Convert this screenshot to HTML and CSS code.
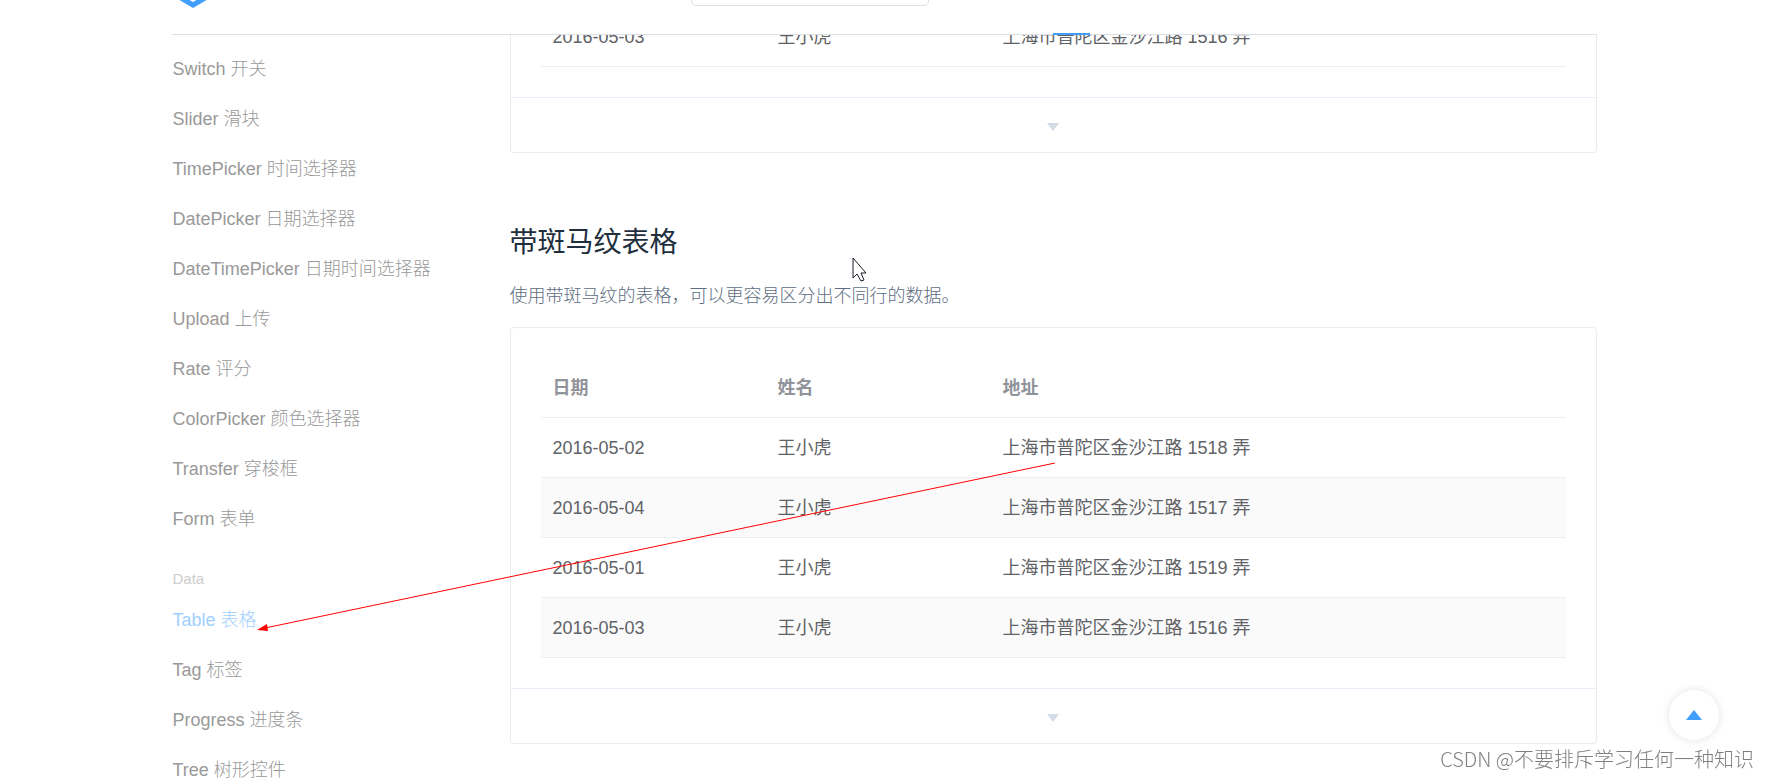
FILE: index.html
```html
<!DOCTYPE html>
<html lang="zh-CN">
<head>
<meta charset="utf-8">
<title>Table 表格</title>
<meta name="viewport" content="width=device-width, initial-scale=1">
<link rel="stylesheet" href="styles.css">
</head>
<body>
<header class="header">
  <div class="header-inner">
    <a class="logo" href="#" aria-label="Element">
      <svg width="42" height="46" viewBox="0 0 42 46" aria-hidden="true"><path d="M21 3 38 13V33L21 43 4 33V13Z" fill="none" stroke="#409eff" stroke-width="5"/></svg>
    </a>
    <input class="search" type="search" aria-label="搜索">
    <span class="nav-active"></span>
  </div>
</header>

<div class="page">
  <nav class="side">
    <a href="#">Switch 开关</a>
    <a href="#">Slider 滑块</a>
    <a href="#">TimePicker 时间选择器</a>
    <a href="#">DatePicker 日期选择器</a>
    <a href="#">DateTimePicker 日期时间选择器</a>
    <a href="#">Upload 上传</a>
    <a href="#">Rate 评分</a>
    <a href="#">ColorPicker 颜色选择器</a>
    <a href="#">Transfer 穿梭框</a>
    <a href="#">Form 表单</a>
    <div class="side-group">Data</div>
    <a class="active" href="#">Table 表格</a>
    <a href="#">Tag 标签</a>
    <a href="#">Progress 进度条</a>
    <a href="#">Tree 树形控件</a>
  </nav>

  <main class="content">
    <section class="demo demo-scrolled">
      <div class="demo-body">
        <table class="table">
          <tbody>
            <tr><td>2016-05-03</td><td>王小虎</td><td>上海市普陀区金沙江路 1516 弄</td></tr>
          </tbody>
        </table>
      </div>
      <button class="demo-toggle" type="button" aria-label="展开"><svg width="12" height="8" viewBox="0 0 12 8" aria-hidden="true"><path d="M0 0H12L6 8Z" fill="#d3dce6"/></svg></button>
    </section>

    <h3 class="title">带斑马纹表格</h3>
    <p class="desc">使用带斑马纹的表格，可以更容易区分出不同行的数据。</p>

    <section class="demo">
      <div class="demo-body">
        <table class="table striped">
          <thead>
            <tr><th>日期</th><th>姓名</th><th>地址</th></tr>
          </thead>
          <tbody>
            <tr><td>2016-05-02</td><td>王小虎</td><td>上海市普陀区金沙江路 1518 弄</td></tr>
            <tr><td>2016-05-04</td><td>王小虎</td><td>上海市普陀区金沙江路 1517 弄</td></tr>
            <tr><td>2016-05-01</td><td>王小虎</td><td>上海市普陀区金沙江路 1519 弄</td></tr>
            <tr><td>2016-05-03</td><td>王小虎</td><td>上海市普陀区金沙江路 1516 弄</td></tr>
          </tbody>
        </table>
      </div>
      <button class="demo-toggle" type="button" aria-label="展开"><svg width="12" height="8" viewBox="0 0 12 8" aria-hidden="true"><path d="M0 0H12L6 8Z" fill="#d3dce6"/></svg></button>
    </section>
  </main>
</div>

<button class="backtop" type="button" aria-label="返回顶部"><svg width="16" height="10" viewBox="0 0 16 10" aria-hidden="true"><path d="M8 0 16 10H0Z" fill="#409eff"/></svg></button>

<svg class="arrow" width="799" height="172" viewBox="0 0 799 172" aria-hidden="true">
  <path d="M798 1 8 166" stroke="#f00" stroke-width="1" fill="none"/>
  <path d="M0 168 10 162 11 169Z" fill="#f00"/>
</svg>
<svg class="cursor" width="17" height="26" viewBox="0 0 17 26" aria-hidden="true"><path d="M1 1V21L5 17 9 24 12 23 9 16H14Z" fill="#fff" stroke="#1a1a2a" stroke-width="1"/></svg>
<div class="watermark">CSDN @不要排斥学习任何一种知识</div>
</body>
</html>
```
FILE: styles.css
```css
* {
  box-sizing: border-box;
}

body {
  margin: 0;
  height: 100vh;
  overflow: hidden;
  background: #fff;
  color: #606266;
  font-family: "Liberation Sans", "Noto Sans CJK SC", sans-serif;
  font-size: 18px;
  font-weight: 400;
}

.header {
  position: fixed;
  z-index: 2;
  top: -65px;
  left: 0;
  right: 0;
  height: 100px;
}

.header-inner {
  display: flex;
  align-items: center;
  max-width: 1425px;
  height: 100%;
  margin: 0 auto;
  border-bottom: 1px solid #dcdfe6;
  background: #fff;
}

.logo {
  display: flex;
  width: 519px;
}

.search {
  width: 238px;
  height: 42px;
  border: 1px solid #dcdfe6;
  border-radius: 5px;
  background: #fff;
}

.nav-active {
  align-self: flex-end;
  width: 37px;
  height: 2px;
  margin: 0 0 -1px 124px;
  background: #409eff;
}

.page {
  display: flex;
  max-width: 1425px;
  margin: 0 auto;
}

.side {
  flex: 0 0 338px;
  padding: 44px 0 0 1px;
  font-weight: 300;
}

.side a {
  display: block;
  color: #999;
  line-height: 50px;
  text-decoration: none;
}

.side .active {
  color: #9fcfff;
}

.side-group {
  padding-top: 19px;
  color: #ccc;
  font-size: 15px;
  line-height: 32px;
}

.content {
  flex: 1;
  min-width: 0;
}

.demo {
  border: 1px solid #ebebeb;
  border-radius: 4px;
}

.demo-body {
  padding: 30px;
}

.demo-scrolled {
  border-top: 0;
}

.demo-scrolled .demo-body {
  padding-top: 7px;
}

.table {
  width: 100%;
  table-layout: fixed;
  border-collapse: separate;
  border-spacing: 0;
}

.table th,
.table td {
  height: 60px;
  padding: 0 12px;
  border-bottom: 1px solid #ebeef5;
  line-height: 28px;
  text-align: left;
}

.table th:not(:last-child),
.table td:not(:last-child) {
  width: 225px;
}

.table th {
  color: #909399;
  font-weight: 700;
}

.striped tbody tr:nth-child(even) {
  background: #fafafa;
}

.demo-toggle {
  display: flex;
  align-items: center;
  justify-content: center;
  width: 100%;
  height: 55px;
  padding: 3px 0 0;
  border: 0;
  border-top: 1px solid #eaeefb;
  background: none;
}

.title {
  margin: 70px 0 18px;
  color: #1f2f3d;
  font-size: 28px;
  font-weight: 400;
  line-height: 40px;
}

.desc {
  margin: 0 0 16px;
  color: #5e6d82;
  font-weight: 300;
  line-height: 30px;
}

.backtop {
  position: fixed;
  right: 49px;
  bottom: 38px;
  display: flex;
  align-items: center;
  justify-content: center;
  width: 50px;
  height: 50px;
  padding: 0;
  border: 0;
  border-radius: 50%;
  background: #fff;
  box-shadow: 0 0 8px rgba(0, 0, 0, 0.12);
}

.arrow {
  position: absolute;
  top: 462px;
  left: 257px;
}

.cursor {
  position: absolute;
  top: 257px;
  left: 852px;
}

.watermark {
  position: fixed;
  right: 14px;
  bottom: 4px;
  color: #808080;
  font-family: "Noto Sans CJK SC", sans-serif;
  font-size: 20px;
  font-weight: 300;
  line-height: 30px;
}
```
